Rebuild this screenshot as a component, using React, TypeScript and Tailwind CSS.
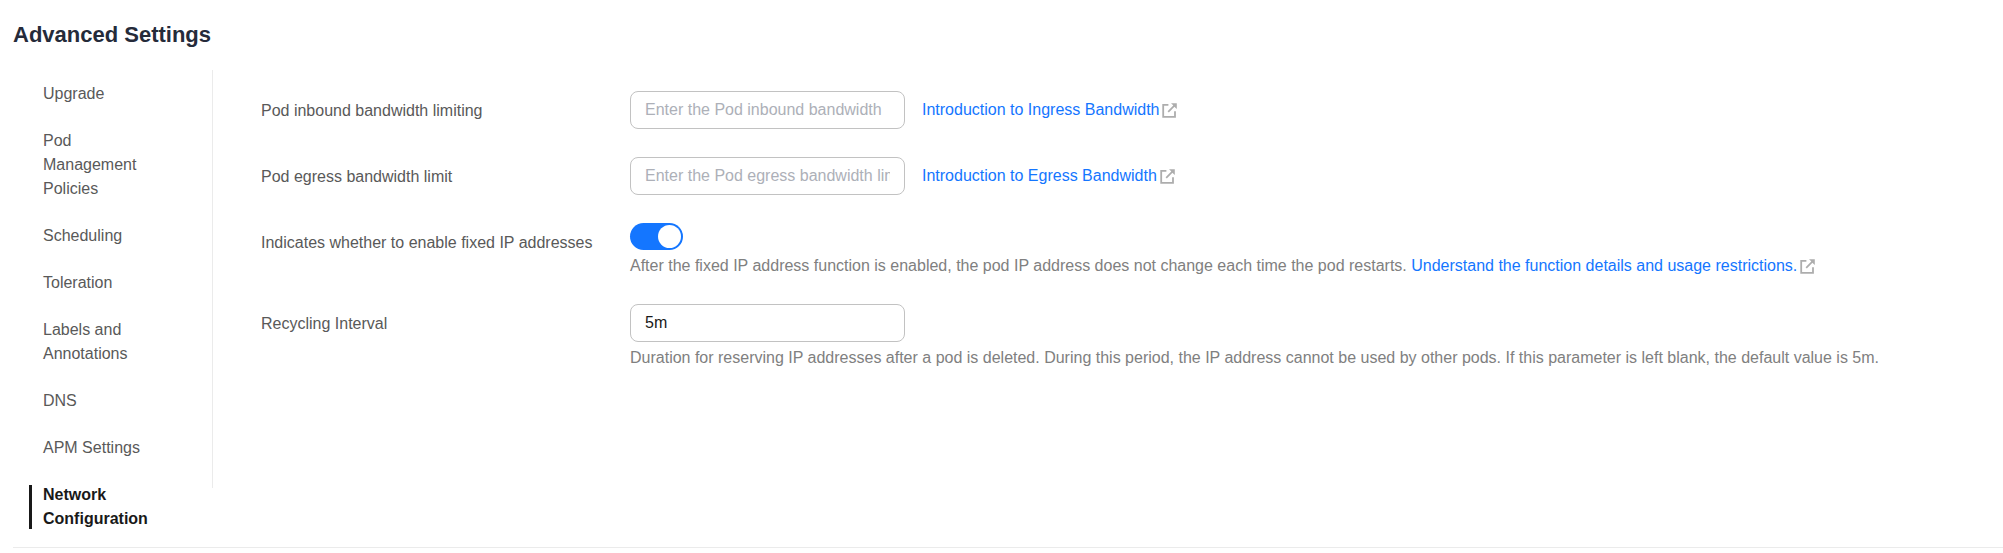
import { useId, useState, type ReactNode } from "react";

const SECTIONS = [
  "Upgrade",
  "Pod Management Policies",
  "Scheduling",
  "Toleration",
  "Labels and Annotations",
  "DNS",
  "APM Settings",
  "Network Configuration",
];

function ExternalIcon() {
  return (
    <svg
      viewBox="0 0 15 15"
      className="size-[15px] shrink-0 text-[#adadad]"
      fill="none"
      stroke="currentColor"
      strokeWidth="1.8"
      aria-hidden="true"
    >
      <path d="M6.4 1.9H1.2V13.9H13V8.2" />
      <path d="M6.2 8.8L12.6 2.4" />
      <path d="M9 0.2H14.8V6L12.6 3.9L10.9 2.1Z" fill="currentColor" stroke="none" />
    </svg>
  );
}

function DocLink({ children }: { children: ReactNode }) {
  return (
    <a href="#docs" className="inline-flex items-center gap-[3px] text-[#1476ff]">
      {children}
      <ExternalIcon />
    </a>
  );
}

function Row({ id, label, children }: { id: string; label: string; children: ReactNode }) {
  return (
    <div className="flex items-start">
      <label htmlFor={id} className="w-[369px] shrink-0 pt-2 leading-6 text-[#595959]">
        {label}
      </label>
      <div className="min-w-0 flex-1">{children}</div>
    </div>
  );
}

function TextField({ id, value, placeholder }: { id: string; value?: string; placeholder?: string }) {
  return (
    <input
      id={id}
      type="text"
      defaultValue={value}
      placeholder={placeholder}
      className="block h-[38px] w-[275px] rounded-lg border border-[#c2c2c2] bg-white px-3.5 text-base text-[#191919] outline-none placeholder:text-[#adb0b8] focus:border-[#1476ff]"
    />
  );
}

export default function App() {
  const base = useId();
  const [active, setActive] = useState("Network Configuration");
  const [fixedIp, setFixedIp] = useState(true);

  return (
    <div className="bg-white pl-[13px] pt-5 pb-[5px] font-['Liberation_Sans',Arial,sans-serif] text-base">
      <h2 className="text-[22px] leading-[30px] font-bold text-[#252b3a]">Advanced Settings</h2>
      <div className="mt-5 flex items-start border-b border-[#ebebeb] pb-4">
        <nav className="flex w-[199px] shrink-0 flex-col gap-[23px] pt-3 pr-14 pl-4" aria-label="Advanced settings">
          {SECTIONS.map((name) => (
            <button
              key={name}
              type="button"
              onClick={() => setActive(name)}
              className={
                name === active
                  ? "relative pl-3.5 text-left leading-6 font-bold text-[#191919] before:absolute before:inset-y-0.5 before:left-0 before:w-[3px] before:bg-[#191919]"
                  : "relative pl-3.5 text-left leading-6 text-[#595959]"
              }
            >
              {name}
            </button>
          ))}
        </nav>
        <main className="flex min-h-[418px] flex-1 flex-col gap-7 border-l border-[#ebebeb] pt-[21px] pl-12">
          <Row id={`${base}-in`} label="Pod inbound bandwidth limiting">
            <div className="flex items-center gap-[17px]">
              <TextField id={`${base}-in`} placeholder="Enter the Pod inbound bandwidth" />
              <DocLink>Introduction to Ingress Bandwidth</DocLink>
            </div>
          </Row>
          <Row id={`${base}-out`} label="Pod egress bandwidth limit">
            <div className="flex items-center gap-[17px]">
              <TextField id={`${base}-out`} placeholder="Enter the Pod egress bandwidth limit" />
              <DocLink>Introduction to Egress Bandwidth</DocLink>
            </div>
          </Row>
          <Row id={`${base}-fixed`} label="Indicates whether to enable fixed IP addresses">
            <input
              id={`${base}-fixed`}
              type="checkbox"
              role="switch"
              checked={fixedIp}
              onChange={(e) => setFixedIp(e.target.checked)}
              className="flex h-[27px] w-[53px] cursor-pointer appearance-none items-center rounded-full bg-[#c2c2c2] px-0.5 before:size-[23px] before:rounded-full before:bg-white checked:justify-end checked:bg-[#1476ff]"
            />
            <p className="mt-1.5 leading-5 text-[#808080]">
              After the fixed IP address function is enabled, the pod IP address does not change each time the pod restarts.{" "}
              <DocLink>Understand the function details and usage restrictions.</DocLink>
            </p>
          </Row>
          <Row id={`${base}-recycle`} label="Recycling Interval">
            <TextField id={`${base}-recycle`} value="5m" />
            <p className="mt-1.5 leading-5 text-[#808080]">
              Duration for reserving IP addresses after a pod is deleted. During this period, the IP address cannot be
              used by other pods. If this parameter is left blank, the default value is 5m.
            </p>
          </Row>
        </main>
      </div>
    </div>
  );
}
